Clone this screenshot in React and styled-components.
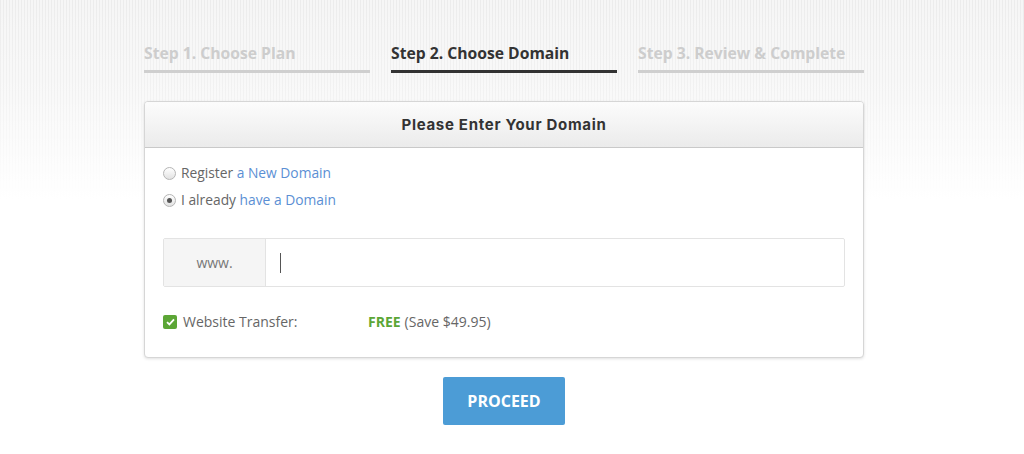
import styled, { createGlobalStyle } from 'styled-components'

const GlobalStyle = createGlobalStyle`
  html, body {
    margin: 0;
    padding: 0;
    background: #fff;
    font-family: 'Open Sans', 'Liberation Sans', sans-serif;
  }
`

const Page = styled.div`
  width: 1024px;
  height: 454px;
  overflow: hidden;
  background:
    linear-gradient(to bottom, rgba(255, 255, 255, 0) 0, rgba(255, 255, 255, 0.3) 90px, #fff 200px),
    repeating-linear-gradient(90deg, #ececec 0 1px, #f6f6f6 1px 3px);
  padding-top: 41px;
  box-sizing: border-box;
`

const Container = styled.div`
  width: 720px;
  margin-left: 144px;
`

const Steps = styled.div`
  display: grid;
  grid-template-columns: repeat(3, 1fr);
  column-gap: 21px;
`

const Step = styled.div`
  font-size: 15.7px;
  font-weight: 700;
  color: ${({ active }) => (active ? '#333' : '#cdcdcd')};
  padding-top: 1px;
  padding-bottom: 5px;
  border-bottom: 3px solid ${({ active }) => (active ? '#333' : '#cfcfcf')};
  line-height: 23px;
`

const Card = styled.div`
  margin-top: 28px;
  background: #fff;
  border: 1px solid #d6d6d6;
  border-radius: 4px;
  box-shadow: 0 1px 3px rgba(0, 0, 0, 0.12);
  overflow: hidden;
`

const CardHeader = styled.div`
  height: 45px;
  display: flex;
  align-items: center;
  justify-content: center;
  background: linear-gradient(to bottom, #fcfcfc, #ebebeb);
  border-bottom: 1px solid #c9c9c9;
  font-family: Inter, 'Liberation Sans', sans-serif;
  font-weight: 700;
  font-size: 15px;
  letter-spacing: 0.7px;
  color: #333;
`

const CardBody = styled.div`
  padding: 15px 18px 26px;
`

const Options = styled.div`
  display: flex;
  flex-direction: column;
  gap: 7px;
`

const Option = styled.label`
  display: flex;
  align-items: center;
  gap: 5px;
  font-size: 13.8px;
  color: #666;
  line-height: 20px;
`

const Radio = styled.span`
  width: 11px;
  height: 11px;
  border-radius: 50%;
  border: 1px solid #b5b5b5;
  background: linear-gradient(to bottom, #fff, #e2e2e2);
  display: inline-flex;
  align-items: center;
  justify-content: center;
  &::after {
    content: '';
    width: 5px;
    height: 5px;
    border-radius: 50%;
    background: ${({ checked }) => (checked ? '#555' : 'transparent')};
  }
`

const Link = styled.a`
  color: #5b8fd4;
  text-decoration: none;
`

const InputGroup = styled.div`
  margin-top: 28px;
  display: flex;
  height: 47px;
  border: 1px solid #e3e3e3;
  border-radius: 2px;
`

const Addon = styled.div`
  width: 101px;
  display: flex;
  align-items: center;
  justify-content: center;
  background: #f5f5f5;
  border-right: 1px solid #e3e3e3;
  font-size: 14px;
  color: #777;
`

const Field = styled.div`
  flex: 1;
  display: flex;
  align-items: center;
  padding-left: 14px;
`

const Caret = styled.span`
  width: 1px;
  height: 20px;
  background: #555;
`

const TransferRow = styled.div`
  margin-top: 25px;
  display: flex;
  align-items: center;
  font-size: 14px;
  color: #666;
`

const Check = styled.span`
  width: 14px;
  height: 14px;
  border-radius: 2px;
  background: #5ca636;
  display: inline-flex;
  align-items: center;
  justify-content: center;
  margin-right: 6px;
`

const TransferLabel = styled.span`
  width: 185px;
`

const Free = styled.span`
  color: #5ca636;
  font-weight: 700;
  margin-right: 4px;
`

const ButtonRow = styled.div`
  display: flex;
  justify-content: center;
  margin-top: 19px;
`

const Button = styled.button`
  width: 122px;
  height: 48px;
  border: none;
  border-radius: 2px;
  background: #4c9cd6;
  color: #fff;
  font-family: 'Open Sans', 'Liberation Sans', sans-serif;
  font-weight: 700;
  font-size: 16px;
  cursor: pointer;
`

export default function App() {
  return (
    <>
      <GlobalStyle />
      <Page>
        <Container>
          <Steps>
            <Step>Step 1. Choose Plan</Step>
            <Step active>Step 2. Choose Domain</Step>
            <Step>Step 3. Review &amp; Complete</Step>
          </Steps>
          <Card>
            <CardHeader>Please Enter Your Domain</CardHeader>
            <CardBody>
              <Options>
                <Option>
                  <Radio />
                  <span>
                    Register <Link>a New Domain</Link>
                  </span>
                </Option>
                <Option>
                  <Radio checked />
                  <span>
                    I already <Link>have a Domain</Link>
                  </span>
                </Option>
              </Options>
              <InputGroup>
                <Addon>www.</Addon>
                <Field>
                  <Caret />
                </Field>
              </InputGroup>
              <TransferRow>
                <Check>
                  <svg width="9" height="8" viewBox="0 0 9 8">
                    <path d="M1 4.2 L3.4 6.4 L8 1.4" fill="none" stroke="#fff" strokeWidth="1.8" />
                  </svg>
                </Check>
                <TransferLabel>Website Transfer:</TransferLabel>
                <Free>FREE</Free>(Save $49.95)
              </TransferRow>
            </CardBody>
          </Card>
          <ButtonRow>
            <Button>PROCEED</Button>
          </ButtonRow>
        </Container>
      </Page>
    </>
  )
}
